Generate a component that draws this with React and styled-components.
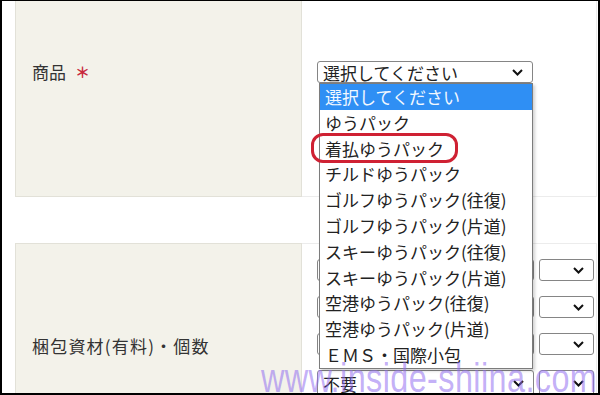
import React from 'react';
import styled, { createGlobalStyle } from 'styled-components';

const GlobalStyle = createGlobalStyle`
  html, body {
    margin: 0;
    padding: 0;
    background: #fff;
    overflow: hidden;
  }
  * { box-sizing: border-box; }
`;

const JP = `"Noto Sans CJK JP", "Noto Sans", sans-serif`;

const Frame = styled.div`
  position: relative;
  width: 600px;
  height: 395px;
  overflow: hidden;
  background: #fff;
  border: 2px solid #000;
  border-top-width: 1px;
  padding: 0 1px 0 13px;
  font-family: ${JP};
`;

const Row = styled.div`
  display: grid;
  grid-template-columns: 287px 1fr;
  height: ${({ $h }) => $h}px;
`;

const Spacer = styled.div`
  height: 46px;
`;

const LabelCell = styled.div`
  background: #f3f2ea;
  border: 1px solid #e2e1d8;
  border-top: ${({ $open }) => ($open ? 'none' : '1px solid #e2e1d8')};
  border-bottom: ${({ $openBottom }) => ($openBottom ? 'none' : '1px solid #e2e1d8')};
  padding: ${({ $top }) => $top}px 0 0 16px;
`;

const Label = styled.div`
  font-size: 17px;
  line-height: 20px;
  color: #333;
  letter-spacing: ${({ $spacing }) => $spacing || 0}px;
  display: flex;
  align-items: center;
  gap: 9px;
`;

const Required = styled.span`
  color: #c8283c;
  font-size: 15px;
  font-weight: 700;
`;

const FieldCell = styled.div`
  border: 1px solid #ececec;
  border-left: none;
  border-top: ${({ $open }) => ($open ? 'none' : '1px solid #ececec')};
  border-bottom: ${({ $openBottom }) => ($openBottom ? 'none' : '1px solid #ececec')};
  padding: ${({ $top }) => $top}px 0 0 15px;
  display: flex;
  flex-direction: column;
  gap: 15px;
`;

const SelectRow = styled.div`
  display: flex;
  gap: 5px;
`;

const Select = styled.div`
  width: ${({ $w }) => $w}px;
  height: ${({ $h }) => $h || 22}px;
  border: 1px solid #858585;
  border-radius: 3px;
  background: #fff;
  display: flex;
  align-items: center;
  justify-content: space-between;
  padding: 0 9px 0 5px;
  font-size: 17px;
  color: #222;
  white-space: nowrap;
`;

const Chevron = () => (
  <svg width="11" height="7" viewBox="0 0 11 7">
    <path d="M1 1 L5.5 5.5 L10 1" fill="none" stroke="#111" strokeWidth="2" />
  </svg>
);

const List = styled.ul`
  position: absolute;
  left: 317px;
  top: 82px;
  width: 214px;
  margin: 0;
  padding: 0;
  list-style: none;
  background: #fff;
  border: 1px solid #7c7c7c;
  box-shadow: 2px 2px 3px rgba(0, 0, 0, 0.18);
  font-size: 17px;
`;

const Item = styled.li`
  height: 25.8px;
  line-height: 25.8px;
  padding-left: 5px;
  white-space: nowrap;
  color: ${({ $active }) => ($active ? '#f2f8ff' : '#222')};
  background: ${({ $active }) => ($active ? '#2f8ff4' : '#fff')};
`;

const Highlight = styled.div`
  position: absolute;
  left: 309px;
  top: 132px;
  width: 147px;
  height: 30px;
  border: 3px solid #cf2133;
  border-radius: 12px;
  pointer-events: none;
`;

const Watermark = styled.div`
  position: absolute;
  left: 259px;
  top: 357px;
  font-family: "Liberation Sans", Arial, sans-serif;
  font-size: 40px;
  line-height: 40px;
  letter-spacing: 0.5px;
  color: rgba(145, 110, 240, 0.55);
  transform: scaleX(0.81);
  transform-origin: left top;
  white-space: nowrap;
  pointer-events: none;
`;

const options = [
  '選択してください',
  'ゆうパック',
  '着払ゆうパック',
  'チルドゆうパック',
  'ゴルフゆうパック(往復)',
  'ゴルフゆうパック(片道)',
  'スキーゆうパック(往復)',
  'スキーゆうパック(片道)',
  '空港ゆうパック(往復)',
  '空港ゆうパック(片道)',
  'ＥＭＳ・国際小包',
];

const packRows = ['', '', '', '不要'];

const App = () => (
  <>
    <GlobalStyle />
    <Frame>
      <Row $h={196}>
        <LabelCell $open $top={61}>
          <Label>
            商品 <Required>＊</Required>
          </Label>
        </LabelCell>
        <FieldCell $open $top={60}>
          <Select $w={216}>
            選択してください
            <Chevron />
          </Select>
        </FieldCell>
      </Row>
      <Spacer />
      <Row $h={160}>
        <LabelCell $openBottom $top={92}>
          <Label $spacing={1.2}>梱包資材(有料)・個数</Label>
        </LabelCell>
        <FieldCell $openBottom $top={15}>
          {packRows.map((text, i) => (
            <SelectRow key={i}>
              <Select $w={217} $h={i === 3 ? 27 : 22}>
                {text}
                <Chevron />
              </Select>
              <Select $w={55} $h={i === 3 ? 27 : 22}>
                <span />
                <Chevron />
              </Select>
            </SelectRow>
          ))}
        </FieldCell>
      </Row>

      <List>
        {options.map((o, i) => (
          <Item key={o} $active={i === 0}>{o}</Item>
        ))}
      </List>
      <Highlight />
      <Watermark>www.inside-shiina.com</Watermark>
    </Frame>
  </>
);

export default App;
